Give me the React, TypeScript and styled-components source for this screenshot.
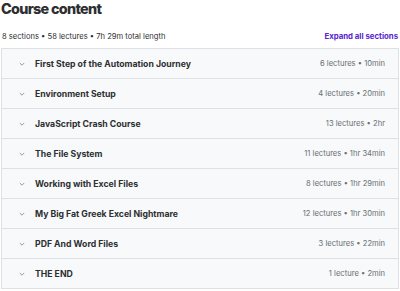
import React, {FunctionComponent} from 'react';
import styled, {createGlobalStyle} from 'styled-components';

/* ====== Data ====== */

interface ISection {
  title: string;
  lectures: number;
  length: string;
}

const sections: ISection[] = [
  {title: 'First Step of the Automation Journey', lectures: 6, length: '10min'},
  {title: 'Environment Setup', lectures: 4, length: '20min'},
  {title: 'JavaScript Crash Course', lectures: 13, length: '2hr'},
  {title: 'The File System', lectures: 11, length: '1hr 34min'},
  {title: 'Working with Excel Files', lectures: 8, length: '1hr 29min'},
  {title: 'My Big Fat Greek Excel Nightmare', lectures: 12, length: '1hr 30min'},
  {title: 'PDF And Word Files', lectures: 3, length: '22min'},
  {title: 'THE END', lectures: 1, length: '2min'},
];

/* ====== Global ====== */

const GlobalStyle = createGlobalStyle`
  body {
    margin: 0;
    background: #fff;
    font-family: Inter, "Noto Sans", sans-serif;
    color: #2d2f31;
  }
`

/* ====== Containers ====== */

const Page = styled.section`
  width: 400px;
  padding: 0 1px 0 1px;
  box-sizing: border-box;
`

const Header = styled.div`
  display: flex;
  align-items: center;
  justify-content: space-between;
  height: 12px;
  padding: 0 1px 0 1px;
  margin-bottom: 6px;
`

const SectionList = styled.div`
  border: 1px solid #dde1e5;
  border-bottom: none;
`

const Row = styled.div`
  display: flex;
  align-items: center;
  height: 29px;
  padding: 0 13px 0 15px;
  background: #f7f9fa;
  border-bottom: 1px solid #dde1e5;
`

/* ====== Text Elements ====== */

const Title = styled.h2`
  margin: 0;
  height: 30px;
  font-size: 14.4px;
  font-weight: 800;
  letter-spacing: -0.7px;
  line-height: 18px;
`

const Summary = styled.span`
  font-size: 7.6px;
  color: #2d2f31;
`

const ExpandAll = styled.button`
  border: none;
  background: none;
  padding: 0;
  font-family: inherit;
  font-size: 7.8px;
  font-weight: 700;
  color: #5624d0;
  cursor: pointer;
`

const SectionTitle = styled.span`
  flex: 1;
  margin-left: 8px;
  font-size: 8.7px;
  font-weight: 700;
`

const SectionMeta = styled.span`
  font-size: 7.6px;
  color: #6a6f73;
`

/* ====== Components ====== */

const Chevron: FunctionComponent = () => (
  <svg width="10" height="10" viewBox="0 0 10 10">
    <path d="M2.8 4l2.2 2.2 2.2-2.2" fill="none" stroke="#8a8f93" strokeWidth="0.9" />
  </svg>
)

const SectionRow: FunctionComponent<{section: ISection}> = ({section}) => (
  <Row>
    <Chevron />
    <SectionTitle>{section.title}</SectionTitle>
    <SectionMeta>
      {section.lectures} {section.lectures === 1 ? 'lecture' : 'lectures'} • {section.length}
    </SectionMeta>
  </Row>
)

const App: FunctionComponent = () => (
  <>
    <GlobalStyle />
    <Page>
      <Title>Course content</Title>
      <Header>
        <Summary>8 sections • 58 lectures • 7h 29m total length</Summary>
        <ExpandAll>Expand all sections</ExpandAll>
      </Header>
      <SectionList>
        {sections.map(s => <SectionRow key={s.title} section={s} />)}
      </SectionList>
    </Page>
  </>
)

export default App;
